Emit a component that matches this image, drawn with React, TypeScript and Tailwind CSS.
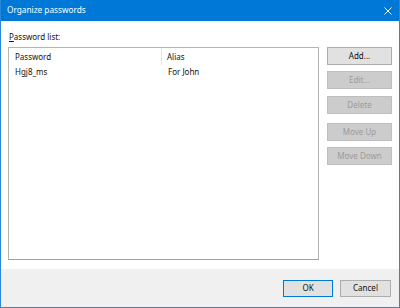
import React from "react";

const font = { fontFamily: '"Noto Sans", "Open Sans", sans-serif' };

function Btn({ label, disabled, primary, className = "" }: { label: string; disabled?: boolean; primary?: boolean; className?: string }) {
  const base = "flex items-center justify-center text-[8px] leading-none border";
  const look = disabled
    ? "bg-[#cccccc] border-[#bfbfbf] text-[#9b9b9b]"
    : primary
    ? "bg-[#e1e1e1] border-[#0078d7] text-[#111111]"
    : "bg-[#e1e1e1] border-[#adadad] text-[#111111]";
  return <div className={`${base} ${look} ${className}`}>{label}</div>;
}

export default function App() {
  return (
    <div className="w-[400px] h-[308px] flex flex-col border-x border-b border-[#2b88d8] bg-white overflow-hidden" style={font}>
      <div className="h-[21px] shrink-0 bg-[#0078d7] flex items-center justify-between pl-[7px] pr-[7px] -mx-px">
        <span className="text-white text-[8.25px] leading-none">Organize passwords</span>
        <svg width="8" height="8" viewBox="0 0 8 8" className="mr-[1px]">
          <path d="M0.5 0.5 L7.5 7.5 M7.5 0.5 L0.5 7.5" stroke="white" strokeWidth="1" />
        </svg>
      </div>
      <div className="flex-1 flex flex-col pt-[10px] pl-[7px] pr-[7px] pb-[9px]">
        <div className="h-[12px] mb-[4px] pl-[1px] text-[8px] leading-[12px] text-[#111111]">
          <span className="underline underline-offset-1">P</span>assword list:
        </div>
        <div className="flex-1 flex gap-[8px]">
          <div className="flex-1 border border-[#b4b4b4] border-b-[#a0a0a0] bg-white flex flex-col">
            <div className="h-[17px] flex text-[8px] text-[#111111]">
              <div className="w-[153px] flex items-center pl-[6px] border-r border-[#e5e5e5]">Password</div>
              <div className="flex-1 flex items-center pl-[5px]">Alias</div>
            </div>
            <div className="h-[14px] flex text-[8px] text-[#111111]">
              <div className="w-[154px] flex items-center pl-[6px]">Hgj8_ms</div>
              <div className="flex-1 flex items-center pl-[5px]">For John</div>
            </div>
          </div>
          <div className="w-[65px] flex flex-col">
            <Btn label="Add..." className="h-[18px]" />
            <Btn label="Edit..." disabled className="h-[18px] mt-[6px]" />
            <Btn label="Delete" disabled className="h-[18px] mt-[7px]" />
            <Btn label="Move Up" disabled className="h-[18px] mt-[9px]" />
            <Btn label="Move Down" disabled className="h-[18px] mt-[6px]" />
          </div>
        </div>
      </div>
      <div className="h-[38px] shrink-0 bg-[#f0f0f0] flex items-center justify-end gap-[7px] pr-[8px]">
        <Btn label="OK" primary className="w-[50px] h-[17px]" />
        <Btn label="Cancel" className="w-[51px] h-[17px]" />
      </div>
    </div>
  );
}
